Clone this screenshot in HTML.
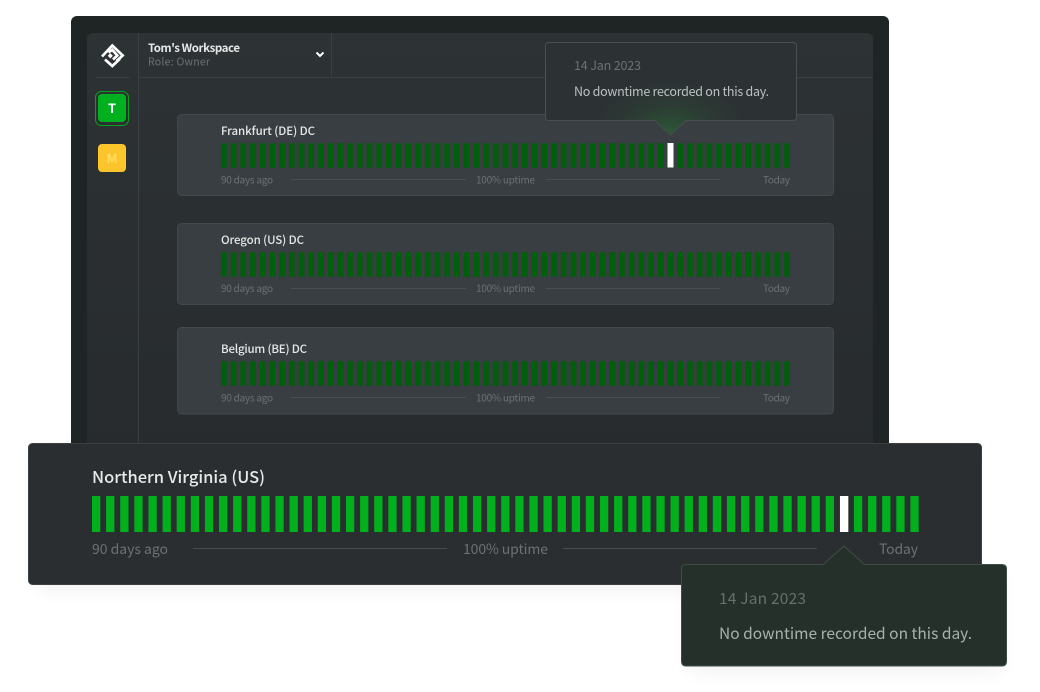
<!DOCTYPE html>
<html><head><meta charset="utf-8"><style>
html,body{margin:0;padding:0;background:#fff;width:1040px;height:692px;overflow:hidden}
svg{display:block;filter:blur(.35px)}
text{font-family:"Noto Sans CJK JP","Liberation Sans",sans-serif}
.t{font-size:11.5px;font-weight:500;fill:#e6e8e8}
.s{font-size:10px;fill:#6c7274}
.l{fill:#4a5052}
.b{stroke:#005f0b;stroke-width:24.5;stroke-dasharray:5.7 4.01;fill:none}
.w{fill:#fff}
</style></head><body>
<svg width="1040" height="692" viewBox="0 0 1040 692" xmlns="http://www.w3.org/2000/svg">
<defs>
<filter id="sh" x="-10%" y="-30%" width="120%" height="160%"><feGaussianBlur stdDeviation="10"/></filter>
<linearGradient id="inner" x1="0" y1="0" x2="0" y2="1"><stop offset="0" stop-color="#2d3234"/><stop offset="1" stop-color="#272b2d"/></linearGradient>
<radialGradient id="glow" gradientUnits="userSpaceOnUse" cx="0" cy="0" r="1" gradientTransform="translate(670 130) scale(85 55)"><stop offset="0" stop-color="#2c5535"/><stop offset="1" stop-color="#2c3234" stop-opacity="0"/></radialGradient>
</defs>
<rect x="40" y="452" width="930" height="138" fill="#000" opacity=".05" filter="url(#sh)"/>
<rect x="690" y="575" width="310" height="96" fill="#000" opacity=".06" filter="url(#sh)"/>

<rect x="71" y="16" width="818" height="440" rx="6" fill="#1f2425"/>
<rect x="87" y="33" width="786" height="420" rx="6" fill="url(#inner)"/>
<rect x="138" y="33" width="1" height="420" fill="#3a4042"/>
<rect x="139" y="77" width="734" height="1" fill="#3a4042"/>
<rect x="95" y="77" width="35" height="1" fill="#3a4042"/>
<rect x="331" y="33" width="1" height="44" fill="#3a4042"/>

<g fill="none" stroke="#fff" stroke-width="2.7">
<path d="M102 56.500 L112.300 45.500 L122.700 55.500 L116.500 61"/>
<path d="M105 59.500 L112.300 66 L120 58.800"/>
<path d="M108.500 52.500 L112.300 49.800 L117.300 55.500 L113 59.500"/>
</g>
<rect x="108.500" y="54" width="3.600" height="3.600" fill="#fff" transform="rotate(45 110.300 55.800)"/>

<text x="148" y="52" class="t" textLength="92" style="font-weight:700">Tom's Workspace</text>
<text x="148" y="65.5" class="s" style="font-size:10.5px" textLength="62">Role: Owner</text>
<path d="M316.5 52.5 L320 56 L323.5 52.5" fill="none" stroke="#fff" stroke-width="2"/>

<rect x="95.5" y="91.5" width="33" height="34" rx="6" fill="none" stroke="#00a51c" stroke-width="1"/>
<rect x="98" y="94" width="28" height="28" rx="4" fill="#00b01e"/>
<text x="112" y="113" text-anchor="middle" style="font-size:13px;font-weight:700" fill="#fff">T</text>
<rect x="98" y="144" width="28" height="28" rx="4" fill="#fdc52c"/>
<text x="112" y="163" text-anchor="middle" style="font-size:13px;font-weight:700" fill="#ffdc66">M</text>

<rect x="177.5" y="114.5" width="656" height="81" rx="4" fill="#383e41" stroke="#42484b"/>
<rect x="177.5" y="223.5" width="656" height="81" rx="4" fill="#383e41" stroke="#42484b"/>
<rect x="177.5" y="327.5" width="656" height="86.500" rx="4" fill="#383e41" stroke="#42484b"/>

<text x="221" y="135" class="t" textLength="94">Frankfurt (DE) DC</text>
<line x1="221" x2="790" y1="155.5" y2="155.5" class="b"/>
<rect x="667.5" y="143" width="6" height="24.5" class="w"/>
<text x="221" y="183.5" class="s" textLength="52">90 days ago</text>
<rect x="291" y="179" width="175" height="1" class="l"/>
<text x="476" y="183.5" class="s" textLength="59">100% uptime</text>
<rect x="546" y="179" width="174" height="1" class="l"/>
<text x="763" y="183.5" class="s" textLength="27">Today</text>

<text x="221" y="244" class="t" textLength="83">Oregon (US) DC</text>
<line x1="221" x2="790" y1="264.5" y2="264.5" class="b"/>
<text x="221" y="292" class="s" textLength="52">90 days ago</text>
<rect x="291" y="288" width="175" height="1" class="l"/>
<text x="476" y="292" class="s" textLength="59">100% uptime</text>
<rect x="546" y="288" width="174" height="1" class="l"/>
<text x="763" y="292" class="s" textLength="27">Today</text>

<text x="221" y="353" class="t" textLength="86">Belgium (BE) DC</text>
<line x1="221" x2="790" y1="373.5" y2="373.5" class="b"/>
<text x="221" y="401.5" class="s" textLength="52">90 days ago</text>
<rect x="291" y="397" width="175" height="1" class="l"/>
<text x="476" y="401.5" class="s" textLength="59">100% uptime</text>
<rect x="546" y="397" width="174" height="1" class="l"/>
<text x="763" y="401.5" class="s" textLength="27">Today</text>

<path d="M549 42.5 H793 Q796.5 42.5 796.5 46 V117 Q796.5 120.5 793 120.5 H686 L670.5 135 L655 120.5 H549 Q545.5 120.5 545.5 117 V46 Q545.5 42.5 549 42.5 Z" fill="#2c3234" stroke="#485152"/>
<path d="M549 43 H793 Q796 43 796 46 V117 Q796 120 793 120 H686 L670.5 134.500 L655 120 H549 Q546 120 546 117 V46 Q546 43 549 43 Z" fill="url(#glow)"/>
<text x="574" y="70" style="font-size:12.5px" fill="#6c7274" textLength="67">14 Jan 2023</text>
<text x="574" y="96" style="font-size:12.5px" fill="#bcc0c1" textLength="195">No downtime recorded on this day.</text>

<rect x="28.5" y="443.5" width="953" height="141" rx="4" fill="#2a2e30" stroke="#3b4143"/>
<text x="92" y="483" style="font-size:16.5px;font-weight:500" fill="#e8eaea" textLength="173">Northern Virginia (US)</text>
<line x1="92" x2="919" y1="514" y2="514" stroke="#00b01c" stroke-width="36" stroke-dasharray="8.3 5.81"/>
<rect x="840" y="496" width="8.3" height="36" fill="#fff"/>
<text x="92" y="554" style="font-size:14px" fill="#6c7173" textLength="76">90 days ago</text>
<rect x="193" y="548" width="254" height="1" fill="#474c4e"/>
<text x="463" y="554" style="font-size:14px" fill="#6c7173" textLength="85">100% uptime</text>
<rect x="563" y="548" width="254" height="1" fill="#474c4e"/>
<text x="879" y="554" style="font-size:14px" fill="#6c7173" textLength="39">Today</text>

<path d="M686 564.5 H823 L844 546 L864.500 564.500 H1002 Q1006.500 564.500 1006.500 569 V661 Q1006.500 666 1002 666 H686 Q681.500 666 681.500 661 V569 Q681.500 564.500 686 564.500 Z" fill="#25302b" stroke="#3d4f44"/>
<text x="719" y="604" style="font-size:15.500px" fill="#64716a" textLength="87">14 Jan 2023</text>
<text x="719" y="639" style="font-size:15.500px" fill="#a8b1ab" textLength="253">No downtime recorded on this day.</text>
</svg>
</body></html>
